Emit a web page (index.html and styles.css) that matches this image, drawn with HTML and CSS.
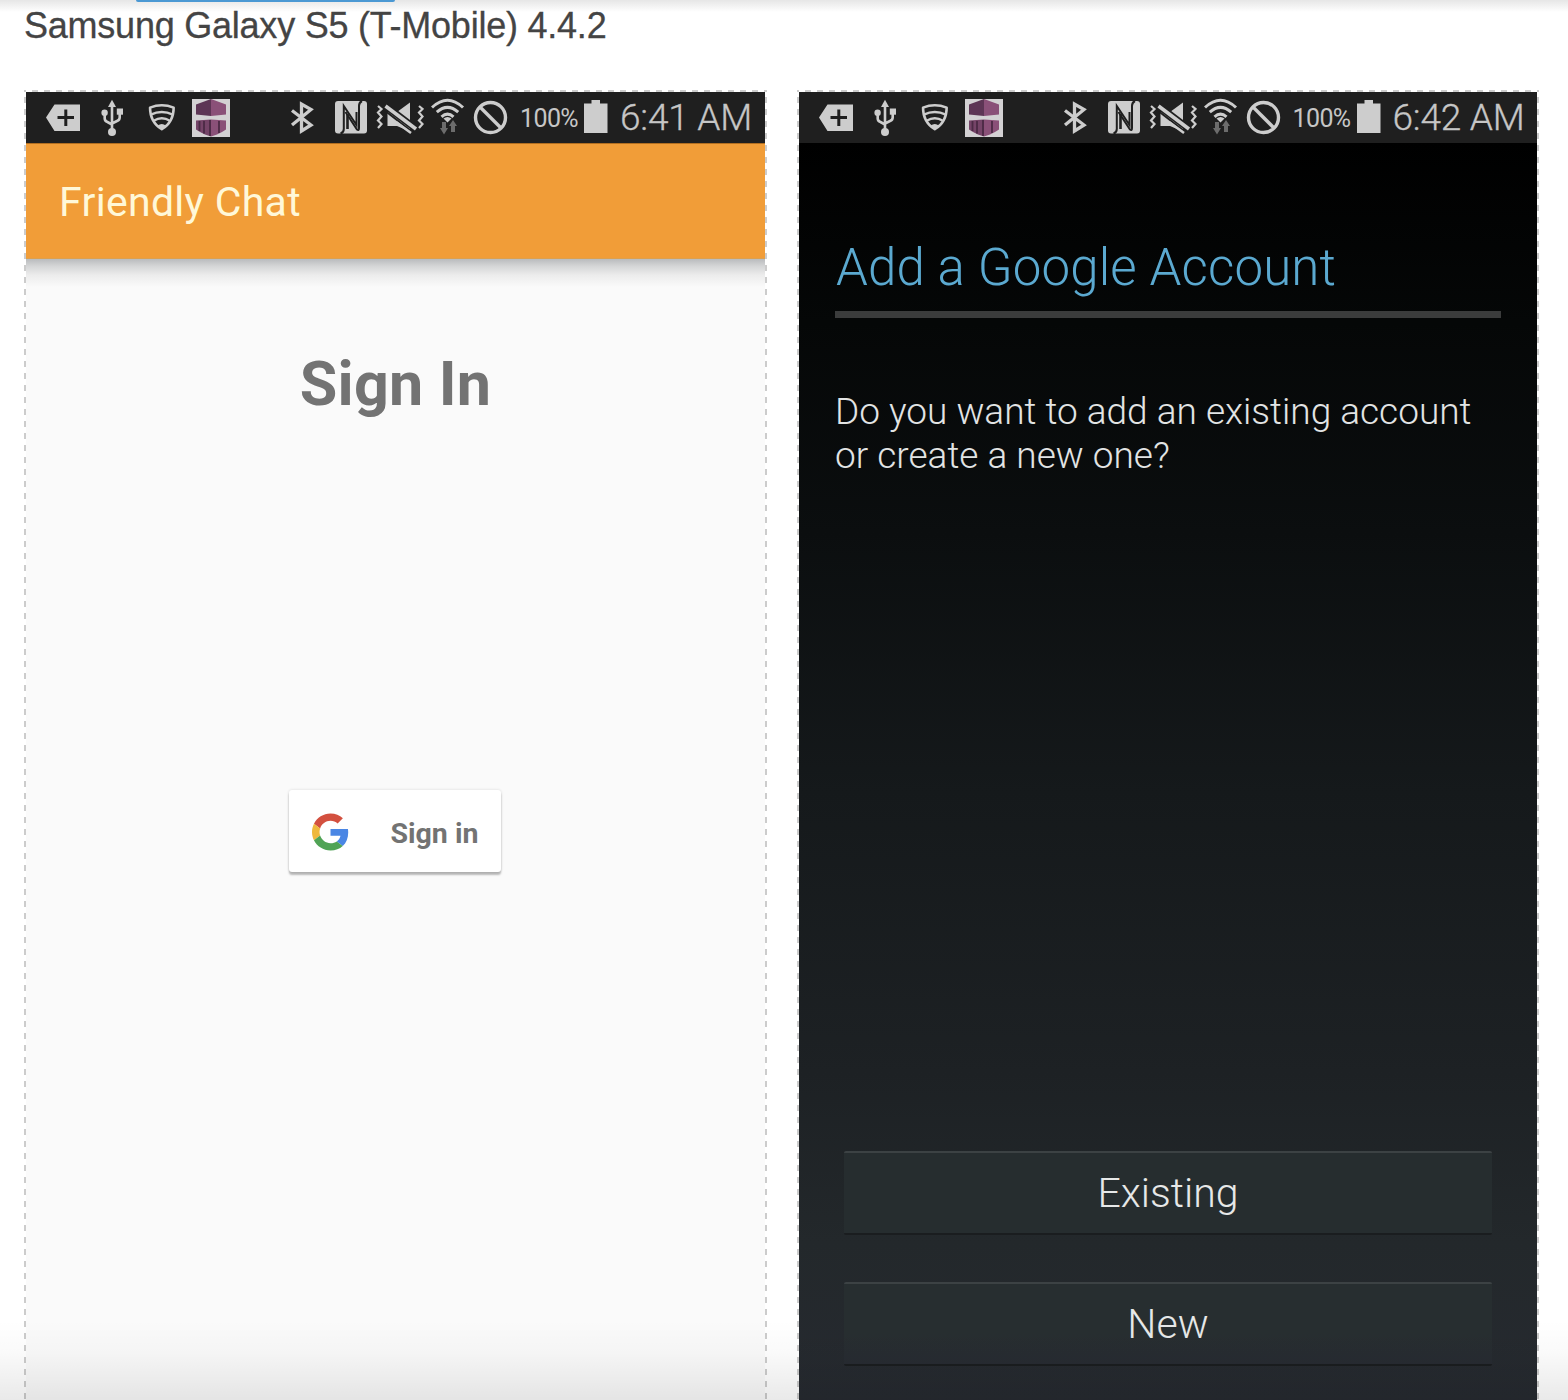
FILE: index.html
```html
<!DOCTYPE html>
<html lang="en">
<head>
<meta charset="utf-8">
<title>Samsung Galaxy S5 (T-Mobile) 4.4.2</title>
<link rel="stylesheet" href="styles.css">
</head>
<body>
<svg class="defs" width="0" height="0" aria-hidden="true">
  <symbol id="i-back" viewBox="46 92 34 51">
    <path fill="#cdcdcd" fill-rule="evenodd" d="M46 117.500L54.500 104.500H80V131H54.500ZM64.300 109.500V116H57.500V119H64.300V126H67.300V119H74V116H67.300V109.500Z"/>
  </symbol>
  <symbol id="i-usb" viewBox="100 92 24 51">
    <g fill="none" stroke="#cdcdcd" stroke-width="2.600"><path d="M112 106V131M104.700 114V118.500Q104.700 121 107.500 122L112 124.500M119.700 112V117.500Q119.700 120 117 121L112 123.500"/></g>
    <g fill="#cdcdcd"><path d="M112 99.800L116 107H108Z"/><circle cx="104.600" cy="112.700" r="3.200"/><path d="M116.800 108.500h6.200v6.200h-6.200z"/><circle cx="112" cy="132" r="4"/></g>
  </symbol>
  <symbol id="i-shield" viewBox="147 92 30 51">
    <g fill="none" stroke="#cdcdcd" stroke-width="2.500" stroke-linejoin="round"><path d="M150 107.700Q161.800 103 173.700 107.700Q173.700 122 161.800 129.300Q150 122 150 107.700Z"/><path d="M150.800 114.700Q161.800 109.500 172.800 114.700M153.700 120.800Q161.800 115.800 169.900 120.800"/></g>
    <path fill="#cdcdcd" d="M157.500 126Q161.800 122 166.100 126L161.800 129.300Z"/>
  </symbol>
  <symbol id="i-aws" viewBox="192 92 38 51">
    <path fill="#d3d1d3" d="M192 99h38v38h-38z"/>
    <path fill="#5d3555" d="M211 99L196 104.500V114.500L211 116Z"/><path fill="#8a5078" d="M211 99L226 104.500V114.500L211 116Z"/>
    <path fill="#754468" d="M196 120.500L211 119.500V136.500L205 134.500L200 132L196 129.500Z"/><path fill="#8a5078" d="M226 120.500L211 119.500V136.500L217 134.500L222 132L226 129.500Z"/>
    <path stroke="#4c2a45" stroke-width="1.800" d="M199.500 121V131M204 121V133.500M210 120V136M219 121V133"/>
  </symbol>
  <symbol id="i-bt" viewBox="290 92 24 51">
    <path fill="none" stroke="#cdcdcd" stroke-width="3.300" d="M292 110.500L311 125L301.500 131V104L311 109.500L292 125"/>
  </symbol>
  <symbol id="i-nfc" viewBox="335 92 32 51">
    <rect x="335" y="101" width="32" height="32.500" rx="3" fill="#cdcdcd"/>
    <g fill="none" stroke="#1f1f1f"><path stroke-width="2" d="M340.500 133.500Q343.800 132.500 343.800 129V106L356.500 125V112"/><path stroke-width="2.600" d="M347.500 129V114"/><path stroke-width="2" d="M345.500 112L357 129.500Q359 131 359 128V106Q359 102.500 362 101"/></g>
  </symbol>
  <symbol id="i-mute" viewBox="376 92 48 51">
    <path fill="#cdcdcd" d="M387.500 112H397L410 102.500V131.500L397 126H387.500Z"/>
    <path stroke="#1f1f1f" stroke-width="7" d="M384 104.500L418 130.500"/>
    <path stroke="#cdcdcd" stroke-width="3.600" d="M385.500 106L416 129"/>
    <path stroke="#1f1f1f" stroke-width="2" d="M386 111.500L413 132.500"/>
    <path stroke="#cdcdcd" stroke-width="2.600" d="M396 122L411 133"/>
    <path fill="none" stroke="#cdcdcd" stroke-width="2.200" d="M378 106L381.500 109L378 112.500L381.500 116.500L378 120.500L381.500 124L378 128M419 106L422.500 109L419 112.500L422.500 116.500L419 120.500L422.500 124L419 128"/>
  </symbol>
  <symbol id="i-wifi" viewBox="431 92 34 51">
    <g fill="none" stroke="#cdcdcd" stroke-width="3"><path d="M432 107.500Q447.500 93 463 107.500M436.800 112.200Q447.500 102.500 458.200 112.200M441.500 116.800Q447.500 111.500 453.500 116.800"/></g>
    <path fill="#cdcdcd" d="M443.500 118.500Q447.500 115.500 451.500 118.500L447.500 122.500Z"/>
    <path fill="#6c6c6c" d="M442 122h4v6h2L444 134.500L440 128H442ZM451 132h4v-6h2L453 120L449 126H451Z"/>
  </symbol>
  <symbol id="i-block" viewBox="473 92 35 51">
    <circle cx="490.500" cy="117.500" r="15" fill="none" stroke="#cdcdcd" stroke-width="3.400"/><path stroke="#cdcdcd" stroke-width="3.400" d="M480 107L501 128"/>
  </symbol>
  <symbol id="i-batt" viewBox="584 92 24 51">
    <path fill="#cdcdcd" d="M584 103.500H591.500V100H600V103.500H607.500V133H584Z"/>
  </symbol>
</svg>

<div class="tab-edge"></div>
<h1 class="title">Samsung Galaxy S5 (T-Mobile) 4.4.2</h1>

<main class="shots">
  <section class="frame">
    <div class="phone light">
      <div class="status">
        <svg class="w34"><use href="#i-back"/></svg><svg class="w24 usb"><use href="#i-usb"/></svg><svg class="w30 shield"><use href="#i-shield"/></svg><svg class="w38 aws"><use href="#i-aws"/></svg>
        <svg class="w24 bt"><use href="#i-bt"/></svg><svg class="w32 nfc"><use href="#i-nfc"/></svg><svg class="w48 mute"><use href="#i-mute"/></svg><svg class="wifi"><use href="#i-wifi"/></svg><svg class="block"><use href="#i-block"/></svg>
        <span class="pct">100%</span><svg class="w24"><use href="#i-batt"/></svg><span class="time">6:41 AM</span>
      </div>
      <header class="appbar">Friendly Chat</header>
      <div class="signin-page">
        <h2 class="heading">Sign In</h2>
        <button class="google-btn">
          <svg width="37" height="38" viewBox="0 0 48 48"><path fill="#d3503f" d="M24 9.500c3.540 0 6.710 1.220 9.210 3.600l6.850-6.850C35.900 2.380 30.470 0 24 0 14.620 0 6.510 5.380 2.560 13.220l7.980 6.190C12.430 13.720 17.740 9.500 24 9.500z"/><path fill="#4a86e4" d="M46.980 24.550c0-1.570-.15-3.090-.38-4.550H24v9.020h12.940c-.58 2.960-2.260 5.480-4.780 7.180l7.730 6c4.510-4.180 7.090-10.360 7.090-17.650z"/><path fill="#efb83c" d="M10.530 28.590c-.48-1.450-.76-2.990-.76-4.590s.27-3.140.76-4.590l-7.980-6.190C.92 16.460 0 20.120 0 24c0 3.880.92 7.540 2.560 10.780l7.970-6.190z"/><path fill="#50a355" d="M24 48c6.480 0 11.930-2.130 15.890-5.810l-7.730-6c-2.150 1.450-4.920 2.300-8.160 2.300-6.260 0-11.570-4.220-13.470-9.910l-7.980 6.190C6.510 42.620 14.620 48 24 48z"/></svg>
          <span>Sign in</span>
        </button>
      </div>
    </div>
  </section>
  <section class="frame">
    <div class="phone dark">
      <div class="status">
        <svg class="w34"><use href="#i-back"/></svg><svg class="w24 usb"><use href="#i-usb"/></svg><svg class="w30 shield"><use href="#i-shield"/></svg><svg class="w38 aws"><use href="#i-aws"/></svg>
        <svg class="w24 bt"><use href="#i-bt"/></svg><svg class="w32 nfc"><use href="#i-nfc"/></svg><svg class="w48 mute"><use href="#i-mute"/></svg><svg class="wifi"><use href="#i-wifi"/></svg><svg class="block"><use href="#i-block"/></svg>
        <span class="pct">100%</span><svg class="w24"><use href="#i-batt"/></svg><span class="time">6:42 AM</span>
      </div>
      <div class="account">
        <h2 class="account-title">Add a Google Account</h2>
        <p class="question">Do you want to add an existing account<br>or create a new one?</p>
        <div class="actions">
          <button class="dark-btn existing">Existing</button>
          <button class="dark-btn new">New</button>
        </div>
      </div>
    </div>
  </section>
</main>
<div class="fade"></div>
</body>
</html>
```
FILE: styles.css
```css
* { box-sizing: border-box; }
html, body { height: 1400px; overflow: hidden; }
body {
  margin: 0;
  background: linear-gradient(#e6e6e6, #fff 12px) #fff;
  font-family: Roboto, "Liberation Sans", sans-serif;
  display: flex;
  flex-direction: column;
}
.defs { position: absolute; }
h1, h2, p { margin: 0; }
button { border: 0; padding: 0; font: inherit; }

.tab-edge {
  flex: none;
  width: 259px;
  height: 2px;
  margin-left: 136px;
  background: #4a98d3;
  border-radius: 0 0 4px 4px;
}
.title {
  flex: none;
  height: 88px;
  padding: 4px 0 0 24px;
  font: 400 36px/40px "Liberation Sans", Arial, sans-serif;
  letter-spacing: -0.23px;
  color: #444;
  -webkit-text-stroke: 0.3px #444;
  white-space: nowrap;
}

.shots { flex: 1; display: flex; gap: 30px; padding-left: 24px; }
.frame {
  flex: none;
  width: 743px;
  height: 1310px;
  padding: 2px 2px 0;
  --v: repeating-linear-gradient(#ccc 0 6px, transparent 6px 12px);
  --h: repeating-linear-gradient(90deg, #ccc 0 6px, transparent 6px 12px);
  background:
    var(--v) 0 -5px / 2px 1320px no-repeat,
    var(--v) 100% -5px / 2px 1320px no-repeat,
    var(--h) -4px 0 / 756px 2px no-repeat;
}
.frame + .frame { width: 742px; }
.phone { height: 100%; display: flex; flex-direction: column; }
.light { background: #fafafa; }
.dark { background: linear-gradient(#000 50px, #050707 230px, #0b0e0f 440px, #15191b 700px, #1d2124 980px, #23282b 1150px, #262a30 1308px); }

.status {
  flex: none;
  display: flex;
  align-items: center;
  height: 51px;
  padding-left: 20px;
  background: #1f1f1f;
  color: #c6c6c6;
  font-weight: 300;
  white-space: nowrap;
}
.status svg { flex: none; height: 51px; }
.w24 { width: 24px; }
.w30 { width: 30px; }
.w32 { width: 32px; }
.w34 { width: 34px; }
.w38 { width: 38px; }
.w48 { width: 48px; }
.usb { margin-left: 20px; }
.shield { margin-left: 23px; }
.aws { margin-left: 15px; }
.bt { margin-left: 60px; }
.nfc { margin-left: 21px; }
.mute { margin-left: 9px; }
.wifi { width: 34px; margin-left: 7px; }
.block { width: 35px; margin-left: 8px; }
.pct { width: 64px; margin-left: 12px; font-size: 25px; font-weight: 400; line-height: 51px; padding-top: 1px; letter-spacing: -0.6px; }
.time { margin-left: 12px; padding-top: 1px; font-size: 37px; line-height: 50px; letter-spacing: -0.2px; -webkit-text-stroke: 0.3px #c6c6c6; }
.dark .status { padding-left: 19.500px; }

.appbar {
  position: relative;
  flex: none;
  height: 116px;
  padding-left: 33px;
  border-top: 1px solid #b36f20;
  background: #f19d38;
  color: #fff8d8;
  font-size: 41px;
  letter-spacing: 0.300px;
  line-height: 116px;
  box-shadow: inset 0 -1px #dca04f;
}
.appbar::after {
  content: "";
  position: absolute;
  left: 0;
  right: 0;
  top: 100%;
  height: 28px;
  background: linear-gradient(#b9bbbd, #d4d5d6 7px, #ececec 16px, #fafafa);
}
.signin-page { display: flex; flex-direction: column; align-items: center; }
.heading {
  margin-top: 90px;
  font-size: 61px;
  letter-spacing: 0.200px;
  line-height: 70px;
  font-weight: 700;
  color: #737373;
}
.google-btn {
  display: flex;
  align-items: center;
  width: 212px;
  height: 82px;
  margin: 371px 1px 0 0;
  padding-left: 22.500px;
  gap: 42px;
  border-radius: 3px;
  background: #fff;
  box-shadow: 0 3px 2px rgba(0, 0, 0, .26), 0 0 3px rgba(0, 0, 0, .14);
  color: #737373;
  font-size: 28.500px;
  font-weight: 700;
  line-height: 40px;
  white-space: nowrap;
}
.google-btn svg { position: relative; top: 1px; }
.google-btn span { padding-top: 5px; }

.account { display: flex; flex-direction: column; padding: 89px 36px 0; font-weight: 300; }
.account-title {
  height: 86px;
  padding-left: 1px;
  border-bottom: 7px solid #3b3c3c;
  color: #5ba9d0;
  font-size: 51px;
  font-weight: 300;
  letter-spacing: 0.160px;
  line-height: 71px;
  white-space: nowrap;
}
.question {
  margin-top: 72px;
  color: #e2e4e4;
  font-size: 37px;
  line-height: 43.500px;
  white-space: nowrap;
}
.actions { display: flex; flex-direction: column; gap: 47px; margin: 674px 9px 0; }
.dark-btn {
  height: 84px;
  padding-top: 1px;
  border-top: 2px solid #3c4244;
  border-bottom: 2px solid #1a1d1f;
  border-radius: 2px;
  background: #262d2f;
  color: #e6e8e8;
  font-size: 41px;
  line-height: 79px;
}
.new { background: linear-gradient(#272e30 60%, #272b32); }

.fade {
  position: absolute;
  left: 0;
  right: 0;
  top: 1320px;
  height: 80px;
  background: linear-gradient(transparent, rgba(0, 0, 0, .02) 40%, rgba(0, 0, 0, .085));
}
```
